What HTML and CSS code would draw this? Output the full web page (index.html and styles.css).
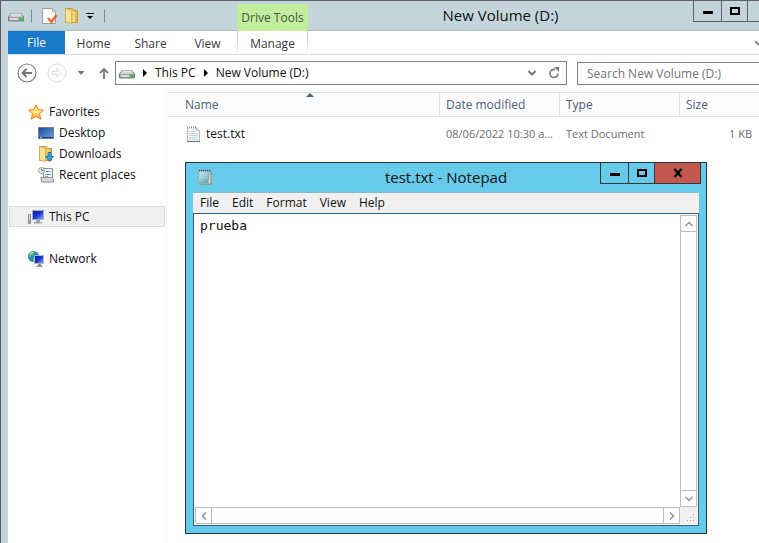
FILE: index.html
```html
<!DOCTYPE html>
<html lang="en">
<head>
<meta charset="utf-8">
<title>New Volume (D:)</title>
<link rel="stylesheet" href="styles.css">
</head>
<body>
<svg class="sprite" aria-hidden="true">
  <defs>
    <linearGradient id="driveTop" x1="0" y1="0" x2="0" y2="1"><stop offset="0" stop-color="#f4f4f4"/><stop offset="1" stop-color="#bfc1c3"/></linearGradient>
    <linearGradient id="folderFill" x1="0" y1="0" x2="1" y2="0"><stop offset="0" stop-color="#fbe79a"/><stop offset="1" stop-color="#dfb243"/></linearGradient>
    <linearGradient id="screenFill" x1="0" y1="0" x2="1" y2="1"><stop offset="0" stop-color="#1e4796"/><stop offset="1" stop-color="#6fa5e2"/></linearGradient>
    <linearGradient id="monitorFill" x1="0" y1="0" x2="1" y2="1"><stop offset="0" stop-color="#0a1aa8"/><stop offset="0.5" stop-color="#1a36d8"/><stop offset="1" stop-color="#86a8f4"/></linearGradient>
    <linearGradient id="starFill" x1="0" y1="0" x2="0" y2="1"><stop offset="0" stop-color="#ffd257"/><stop offset="0.5" stop-color="#ffe890"/><stop offset="1" stop-color="#ff9c22"/></linearGradient>
    <linearGradient id="padFill" x1="0" y1="0" x2="1" y2="1"><stop offset="0" stop-color="#cfeaf2"/><stop offset="1" stop-color="#4f9db3"/></linearGradient>
    <symbol id="drive" viewBox="0 0 16 16">
      <path d="M3 5h10l3 4v3.500l-1 1H1l-1-1V9z" fill="#77797c"/>
      <path d="M3.300 5.500h9.400L15 9H1z" fill="url(#driveTop)"/>
      <path d="M1 9h14v3.500H1z" fill="#a4a7aa"/>
      <path d="M2 10h8v2H2z" fill="#d9dadb"/>
      <path d="M11.500 9.500H14v3h-2.500z" fill="#28c828"/>
    </symbol>
    <symbol id="folder" viewBox="0 0 16 16">
      <path d="M1.500.500h7l1 2h4v12h-12z" fill="url(#folderFill)" stroke="#c79d35"/>
      <path d="M1.500.500l6 2v13l-6-1.500z" fill="#f8e398" stroke="#d0a83e" stroke-width=".7"/>
      <path d="M10 4v10" stroke="#fff2b5"/>
    </symbol>
    <symbol id="notes" viewBox="0 0 16 16">
      <path d="M1.500 1.500h9l3 3v11h-12z" fill="#f7f9fa"/>
      <path d="M1.500 1v14.500M13.500 4v11.500" stroke="#b4b8ba"/>
      <path d="M1 15.500h13" stroke="#6f7476"/>
      <path d="M1 1.500h10" stroke="#8c9194" stroke-width="2" stroke-dasharray="1 1"/>
      <path d="M10.500 1v3.500h3" fill="#ddd" stroke="#b4b8ba"/>
      <path d="M3 5.500h6M3 7.500h9M3 9.500h9M3 11.500h9M3 13.500h9" stroke="#c4d6df"/>
    </symbol>
  </defs>
</svg>

<main class="explorer">
  <header class="titlebar">
    <div class="quick">
      <svg class="icon"><use href="#drive"/></svg>
      <span class="rule"></span>
      <button class="plain" aria-label="Properties">
        <svg class="icon" viewBox="0 0 16 16"><path d="M.500.500h10l3 3v12H.500z" fill="#fbfbfb" stroke="#9c9c9c"/><path d="M10.500.500v3h3" fill="#ddd" stroke="#aaa"/><path d="M6 10l3.500 4L14.500 7" fill="none" stroke="#e4703c" stroke-width="2.600"/></svg>
      </button>
      <button class="plain" aria-label="New folder"><svg class="icon"><use href="#folder"/></svg></button>
      <button class="plain" aria-label="Customize toolbar"><svg class="small" viewBox="0 0 8 8"><path d="M0 1.500h8" stroke="#000"/><path d="M1 4h6L4 7z"/></svg></button>
      <span class="rule"></span>
    </div>
    <div class="context">Drive Tools</div>
    <h1 class="title">New Volume (D:)</h1>
    <div class="caption">
      <button class="min" aria-label="Minimize"><svg viewBox="0 0 10 10"><path d="M0 5h10v3H0z"/></svg></button>
      <button class="max" aria-label="Maximize"><svg viewBox="0 0 10 10"><path d="M1 2h8v6H1z" fill="none" stroke="#000" stroke-width="2"/></svg></button>
      <button class="close" aria-label="Close"></button>
    </div>
  </header>

  <nav class="ribbon">
    <button class="file">File</button>
    <button>Home</button>
    <button>Share</button>
    <button>View</button>
    <button class="manage">Manage</button>
    <button class="expand" aria-label="Expand ribbon"><svg viewBox="0 0 4 8"><path d="M0 2l4 4" fill="none" stroke="#888" stroke-width="2"/></svg></button>
  </nav>

  <div class="navbar">
    <button class="plain" aria-label="Back"><svg class="round" viewBox="0 0 20 20"><circle cx="10" cy="10" r="9" fill="none" stroke="#808080" stroke-width="1.200"/><path d="M15 10H6M9.500 6L5.500 10l4 4" fill="none" stroke="#777" stroke-width="2"/></svg></button>
    <button class="plain" aria-label="Forward"><svg class="round" viewBox="0 0 20 20"><circle cx="10" cy="10" r="9" fill="none" stroke="#dcdcdc"/><path d="M5 8.500h5V5.500L14.500 10 10 14.500v-3H5z" fill="none" stroke="#d8d8d8"/></svg></button>
    <button class="plain" aria-label="Recent locations"><svg class="small" viewBox="0 0 8 8"><path d="M.500 2h7L4 6z" fill="#777"/></svg></button>
    <button class="plain up" aria-label="Up"><svg class="arrow" viewBox="0 0 10 12"><path d="M5 12V2M1 6l4-4 4 4" fill="none" stroke="#808080" stroke-width="2"/></svg></button>
    <div class="address">
      <svg class="icon"><use href="#drive"/></svg>
      <svg class="small" viewBox="0 0 8 8"><path d="M2 0l4 4-4 4z"/></svg>
      <a href="#pc">This PC</a>
      <svg class="small" viewBox="0 0 8 8"><path d="M2 0l4 4-4 4z"/></svg>
      <a href="#volume">New Volume (D:)</a>
      <button class="plain push" aria-label="Previous locations"><svg class="small" viewBox="0 0 8 8"><path d="M.500 2L4 5.500 7.500 2" fill="none" stroke="#777" stroke-width="2"/></svg></button>
      <button class="plain" aria-label="Refresh"><svg class="refresh" viewBox="0 0 12 12"><path d="M7 2.500H5.500a4 4 0 1 0 4.500 4" fill="none" stroke="#808080" stroke-width="1.800"/><path d="M6 0h5v5z" fill="#808080"/></svg></button>
    </div>
    <input class="search" type="search" aria-label="Search New Volume (D:)" placeholder="Search New Volume (D:)">
  </div>

  <div class="content">
    <aside class="sidebar">
      <a href="#favorites"><svg class="icon" viewBox="0 0 16 16"><path d="M8 .700l2.200 4.900 5.300.500-4 3.600 1.300 5.500L8 12.300l-4.800 2.900 1.300-5.500-4-3.600 5.300-.500z" fill="url(#starFill)" stroke="#e68519"/></svg>Favorites</a>
      <a class="sub" href="#desktop"><svg class="icon" viewBox="0 0 16 16"><path d="M.500 2.500h15v11H.500z" fill="url(#screenFill)" stroke="#6e7f99"/><path d="M1 12.500h14" stroke="#233d6a"/><path d="M2 12.500h2" stroke="#69b7ed"/></svg>Desktop</a>
      <a class="sub" href="#downloads"><svg class="icon" viewBox="0 0 16 16"><use href="#folder"/><path d="M10 6.500h3v4h2.500l-4 5-4-5H10z" fill="#3d9fe3" stroke="#1767a5" stroke-width=".8"/></svg>Downloads</a>
      <a class="sub" href="#recent"><svg class="icon" viewBox="0 0 16 16"><path d="M5.500 1.500h9v9h-9z" fill="#f3f6f7" stroke="#8b9295"/><path d="M3 10.500h11l1.500 2v2.500h-12z" fill="#d6dadd" stroke="#8c9092"/><path d="M9 4.500h4M7 7.500h6M7 9.500h3" stroke="#6eb8ed"/><path d="M9 7.500h2M8 4.500h2" stroke="#247ac4"/><circle cx="3.500" cy="3.500" r="3" fill="#eef4f7" stroke="#8f999f"/><path d="M3.500 1.500v2h2" fill="none" stroke="#526a79"/></svg>Recent places</a>
      <a class="current" href="#pc"><svg class="icon" viewBox="0 0 16 16"><path d="M.500 5.500h2v9h-2z" fill="#ddd" stroke="#888"/><path d="M1 12h1v1H1z" fill="#38a238"/><path d="M4 1h12v10H4z" fill="#a8adb2"/><path d="M5 2h10v8H5z" fill="url(#monitorFill)"/><path d="M8 11h4v2h2v1.500H6V13h2z" fill="#a2a5a8"/></svg>This PC</a>
      <a class="group" href="#network"><svg class="icon" viewBox="0 0 16 16"><circle cx="5.500" cy="5.500" r="5.500" fill="#2a8bd4"/><path d="M2 2c3-3 5-1 4 1S2 5 1 7C0 5 1 3 2 2zM5 7l3-1v4l-3 1z" fill="#57c64b"/><path d="M2 3l3-2" stroke="#dbf3ff"/><path d="M6 4h10v9H6z" fill="#adb9c5"/><path d="M7 5h8v7H7z" fill="url(#monitorFill)"/><path d="M10 13h3v1.500h1.500V16h-6v-1.500H10z" fill="#899099"/></svg>Network</a>
    </aside>
    <table class="files">
      <colgroup><col><col class="col-date"><col class="col-type"><col class="col-size"></colgroup>
      <thead><tr><th class="sorted">Name</th><th>Date modified</th><th>Type</th><th>Size</th></tr></thead>
      <tbody><tr><td class="name"><span><svg class="icon"><use href="#notes"/></svg>test.txt</span></td><td>08/06/2022 10:30 a...</td><td>Text Document</td><td class="size">1 KB</td></tr></tbody>
    </table>
  </div>
</main>

<section class="notepad">
  <header class="pad-title">
    <svg class="icon" viewBox="0 0 16 16"><path d="M3 2h11v13H3z" fill="#f2ead5" stroke="#927954"/><path d="M2 2h10.500l-1 12H1z" fill="url(#padFill)" stroke="#78adba" stroke-width=".6"/><path d="M2 1.500h12" stroke="#384e55" stroke-width="1.500" stroke-dasharray="1 1"/><path d="M3 5h8M3 7h8M3 9h8" stroke="#b9dde6" stroke-width=".6"/></svg>
    <h2 class="title">test.txt - Notepad</h2>
    <div class="caption">
      <button class="min" aria-label="Minimize"><svg viewBox="0 0 10 10"><path d="M0 5h10v3H0z"/></svg></button>
      <button class="max" aria-label="Maximize"><svg viewBox="0 0 10 10"><path d="M1 2h8v6H1z" fill="none" stroke="#000" stroke-width="2"/></svg></button>
      <button class="close" aria-label="Close"><svg viewBox="0 0 10 10"><path d="M1.500 1l7 8M8.500 1l-7 8" stroke="#000" stroke-width="2.400"/></svg></button>
    </div>
  </header>
  <nav class="menu"><button>File</button><button>Edit</button><button>Format</button><button>View</button><button>Help</button></nav>
  <div class="editor">
    <textarea aria-label="Text editor" spellcheck="false">prueba</textarea>
    <div class="bar vertical">
      <button aria-label="Scroll up"><svg class="small" viewBox="0 0 8 8"><path d="M.500 6L4 2.500 7.500 6"/></svg></button>
      <button aria-label="Scroll down"><svg class="small" viewBox="0 0 8 8"><path d="M.500 2L4 5.500 7.500 2"/></svg></button>
    </div>
    <div class="bar">
      <button aria-label="Scroll left"><svg class="small" viewBox="0 0 8 8"><path d="M6 .500L2.500 4 6 7.500"/></svg></button>
      <button aria-label="Scroll right"><svg class="small" viewBox="0 0 8 8"><path d="M2 .500L5.500 4 2 7.500"/></svg></button>
    </div>
    <div class="grip"><svg viewBox="0 0 8 8"><path d="M6 0h1v1H6zM3 3h1v1H3zM6 3h1v1H6zM0 6h1v1H0zM3 6h1v1H3zM6 6h1v1H6z" fill="#aaa"/></svg></div>
  </div>
</section>
</body>
</html>
```
FILE: styles.css
```css
* { box-sizing: border-box; }

body {
  margin: 0;
  height: 100vh;
  position: relative;
  overflow: hidden;
  font: 12px/16px "Open Sans", "Noto Sans", sans-serif;
  color: #111;
}

button {
  font: inherit;
  color: inherit;
  margin: 0;
  padding: 0;
  border: 0;
  background: none;
}

a { color: inherit; text-decoration: none; }
svg { display: block; flex: none; }
.sprite { position: absolute; width: 0; height: 0; }
.icon { width: 16px; height: 16px; }
.small { width: 8px; height: 8px; }
.plain { display: flex; }

.explorer {
  height: 100%;
  display: flex;
  flex-direction: column;
  border-left: 1px solid #60606a;
  border-top: 1px solid #60606a;
  padding-left: 7px;
  background: #c3d5db;
}

.titlebar {
  display: flex;
  height: 30px;
  border-bottom: 1px solid #b1bec4;
}

.quick {
  width: 229px;
  display: flex;
  align-items: center;
  gap: 6px;
}
.quick .small { margin-right: 4px; }
.rule { width: 1px; height: 12px; background: #84888c; }
.quick .icon + .rule { margin: 0 4px 0 1px; }

.context {
  width: 71px;
  margin: 3px 0 -1px;
  background: #c0ee9c;
  color: #48543f;
  text-align: center;
  line-height: 28px;
}

.title {
  margin: 0;
  flex: 1;
  font-size: 15px;
  font-weight: 400;
  line-height: 28px;
  text-align: center;
  color: #111;
}

.caption { display: flex; }
.caption button {
  display: flex;
  justify-content: center;
  align-items: center;
  height: 22px;
  border: solid #33363c;
  border-width: 0 0 1px 1px;
}
.caption svg { width: 10px; height: 10px; }
.caption .min { width: 28px; }
.caption .max { width: 26px; }
.caption .close { width: 12px; }
.titlebar .caption button { height: 21px; border-color: #60606a; }

.ribbon {
  display: flex;
  height: 24px;
  background: #fff;
  border-bottom: 1px solid #dadbdc;
  color: #3b3b3b;
}
.ribbon button { width: 57px; padding-top: 3px; }
.ribbon .file { width: 57px; padding: 0; background: #1979ca; color: #fff; }
.ribbon .manage {
  width: 71px;
  margin-left: 1px;
  border: solid transparent;
  border-width: 0 1px;
  border-image: linear-gradient(#ccc, #ccc 40%, #fff) 1;
}
.ribbon .expand { width: 4px; padding: 0; margin-left: auto; }
.expand svg { width: 4px; height: 8px; }

.navbar {
  display: flex;
  align-items: center;
  height: 37px;
  padding: 0 0 1px 9px;
  background: #fff;
}
.round { width: 20px; height: 20px; margin-right: 10px; }
.navbar > .plain .small { margin-right: 14px; }
.arrow { width: 10px; height: 12px; }
.up { margin-right: 6px; }

.address {
  flex: 1;
  height: 24px;
  display: flex;
  align-items: center;
  gap: 6px;
  padding: 0 6px 0 3px;
  border: 1px solid #808080;
}
.push { margin-left: auto; margin-right: 6px; }
.refresh { width: 12px; height: 12px; }

/* The right edge of the field lies off screen. */
.search {
  width: 182px;
  height: 23px;
  margin-left: 10px;
  padding: 0 9px;
  border: 1px solid #808080;
  border-right: 0;
  border-radius: 0;
  background: #fff;
  font: inherit;
}
.search::placeholder { color: #757575; opacity: 1; }

.content { flex: 1; display: flex; align-items: flex-start; background: #fff; }

.sidebar {
  width: 159px;
  align-self: stretch;
  padding: 9px 1px 0;
  border-right: 1px solid #f4f4f4;
}
.sidebar a {
  display: flex;
  align-items: center;
  gap: 5px;
  height: 21px;
  padding-left: 19px;
}
.sidebar .sub { padding-left: 29px; }
.sidebar .current {
  margin-top: 21px;
  padding-left: 18px;
  background: #f0f0f0;
  border: 1px solid #dadada;
}
.sidebar .group { margin-top: 21px; }

.files {
  flex: 1;
  table-layout: fixed;
  width: 0;
  margin-left: 1px;
  border-collapse: separate;
  border-spacing: 0;
}
.col-date, .col-type { width: 120px; }
.col-size { width: 79px; }
.files th {
  position: relative;
  height: 25px;
  padding: 0 6px;
  border: solid #e2e2e2;
  border-width: 1px 1px 1px 0;
  background: #fcfcfc;
  color: #4c607a;
  font-weight: 400;
  text-align: left;
}
.files th:first-child { padding-left: 17px; }
.files th:last-child { border-right: 0; }
.sorted::after {
  content: "";
  position: absolute;
  top: 0;
  left: 51%;
  border: 4px solid transparent;
  border-top: 0;
  border-bottom-color: #4c607a;
}
.files td {
  padding: 9px 7px 9px 6px;
  font-size: 11px;
  color: #6d6d6d;
  white-space: nowrap;
}
.files .name { padding-left: 18px; font-size: 12px; color: #111; }
.name span { display: flex; gap: 4px; }
.files .size { text-align: right; }

.notepad {
  position: absolute;
  inset: 162px 52px 9px 185px;
  display: flex;
  flex-direction: column;
  padding: 0 7px 7px;
  border: 1px solid #26353c;
  background: #66caea;
}

.pad-title {
  display: grid;
  grid-template-columns: 1fr auto 1fr;
  height: 29px;
}
.pad-title .icon { margin: 6px 0 0 4px; }
.pad-title .caption { justify-self: end; margin-right: -2px; }
.pad-title .caption button { height: 21px; }
.pad-title .caption .close {
  width: 47px;
  border-right-width: 1px;
  background: #c3584e;
}

.menu {
  display: flex;
  gap: 13px;
  height: 21px;
  padding-left: 7px;
  border-top: 1px solid #8bb8cb;
  background: #f0f0f0;
}

.editor {
  flex: 1;
  display: grid;
  grid-template: 1fr 17px / 1fr 17px;
  padding: 1px;
  border: 1px solid #2f5f8b;
  background: #fff;
}
.editor textarea {
  min-width: 0;
  margin: 0;
  padding: 3px 5px;
  border: 0;
  outline: 0;
  resize: none;
  overflow: hidden;
  background: #fff;
  color: #111;
  font: 13px/16px "DejaVu Sans Mono", monospace;
}
.bar { display: flex; justify-content: space-between; border: 1px solid #bdbdbd; }
.bar.vertical { flex-direction: column; }
.bar button {
  display: flex;
  align-items: center;
  justify-content: center;
  flex: 0 0 16px;
  border: 0 solid #bdbdbd;
}
.bar button:first-child { border-right-width: 1px; }
.bar button:last-child { border-left-width: 1px; }
.bar.vertical button:first-child { border-width: 0 0 1px; }
.bar.vertical button:last-child { border-width: 1px 0 0; }
.bar path { fill: none; stroke: #909090; stroke-width: 1.5px; }
.grip { display: flex; align-items: flex-end; justify-content: flex-end; padding: 2px; background: #f0f0f0; }
.grip svg { width: 8px; height: 8px; }
```
